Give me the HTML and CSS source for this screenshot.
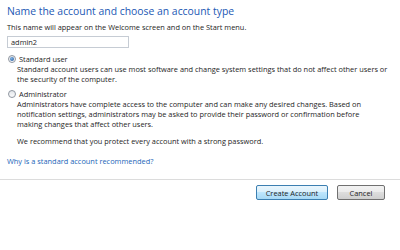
FILE: index.html
```html
<!DOCTYPE html>
<html lang="en">
<head>
  <meta charset="UTF-8" />
  <title>Create New Account</title>
  <link rel="stylesheet" href="styles.css">
</head>
<body>
  <div class="content">
    <h1>Name the account and choose an account type</h1>
    <p class="hint">This name will appear on the Welcome screen and on the Start menu.</p>
    <div class="name-box">admin2</div>

    <div class="option">
      <div class="option-label"><span class="radio checked"></span>Standard user</div>
      <p class="option-desc">Standard account users can use most software and change system settings that do not affect other users or the security of the computer.</p>
    </div>

    <div class="option">
      <div class="option-label"><span class="radio"></span>Administrator</div>
      <p class="option-desc">Administrators have complete access to the computer and can make any desired changes. Based on notification settings, administrators may be asked to provide their password or confirmation before<br>making changes that affect other users.</p>
      <p class="option-desc note">We recommend that you protect every account with a strong password.</p>
    </div>

    <a class="help-link" href="#">Why is a standard account recommended?</a>
  </div>

  <div class="footer">
    <button class="btn primary">Create Account</button>
    <button class="btn">Cancel</button>
  </div>
</body>
</html>
```

FILE: styles.css
```css
body {
  font-family: 'Open Sans', 'Noto Sans', sans-serif;
  margin: 0;
  padding: 0;
  background-color: #fff;
  color: #1e1e1e;
  font-size: 7.4px;
  line-height: 10px;
}
.content {
  padding: 4px 7px 0;
}
h1 {
  font-size: 10.4px;
  font-weight: normal;
  color: #2258b4;
  margin: 0;
  line-height: 14px;
}
.hint {
  margin: 4px 0 0;
}
.name-box {
  width: 114px;
  height: 10px;
  margin-top: 4px;
  padding: 0 3px;
  border: 1px solid #c6ccd4;
  line-height: 10px;
}
.option {
  margin-top: 6px;
}
.option + .option {
  margin-top: 5px;
}
.option-label {
  display: flex;
  align-items: center;
}
.radio {
  width: 6px;
  height: 6px;
  border-radius: 50%;
  border: 1px solid #8f96a0;
  background: linear-gradient(#e3e6ea, #fbfbfc);
  margin: 0 3px 0 1px;
  position: relative;
}
.radio.checked::after {
  content: '';
  position: absolute;
  left: 1px;
  top: 1px;
  width: 4px;
  height: 4px;
  border-radius: 50%;
  background: radial-gradient(circle at 40% 35%, #7fb6e8, #1e4f93);
}
.option-desc {
  margin: 0 0 0 10px;
}
.note {
  margin-top: 7px;
}
.help-link {
  display: block;
  margin-top: 10px;
  color: #1b65b8;
  text-decoration: none;
}
.footer {
  margin-top: 13px;
  border-top: 1px solid #dcdcdc;
  padding: 5px 15px 0 0;
  display: flex;
  justify-content: flex-end;
  gap: 9px;
}
.btn {
  font-family: inherit;
  font-size: 7.4px;
  color: #1e1e1e;
  height: 15px;
  padding: 0;
  border: 1px solid #707070;
  border-radius: 2px;
  background: linear-gradient(#f2f2f2 0%, #ebebeb 50%, #dddddd 50%, #cfcfcf 100%);
  width: 48px;
}
.btn.primary {
  width: 72px;
  border-color: #3c7fb1;
  background: linear-gradient(#eaf6fd 0%, #d9f0fc 50%, #bee6fd 50%, #a7d9f5 100%);
}
```
